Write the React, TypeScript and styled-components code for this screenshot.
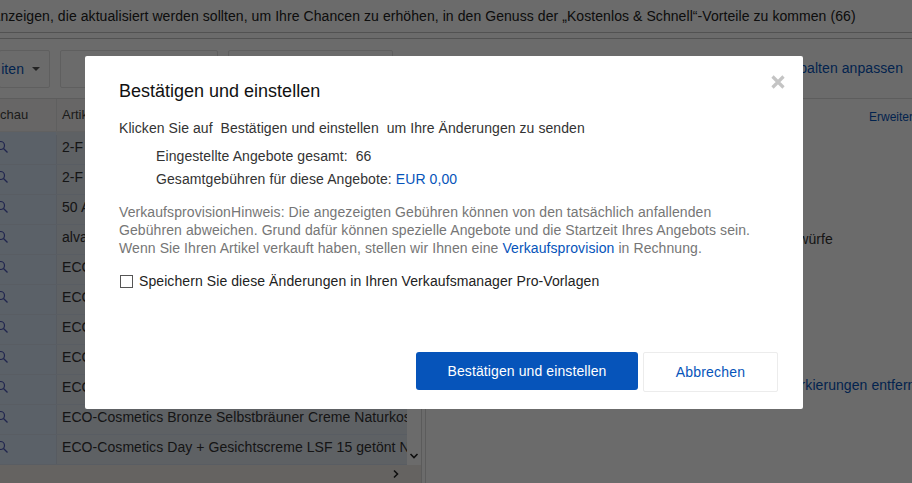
import React from "react";
import styled, { createGlobalStyle } from "styled-components";

const Global = createGlobalStyle`
  html, body { margin: 0; padding: 0; background: #fff; }
  body { font-family: "Liberation Sans", Arial, sans-serif; font-size: 14px; color: #333; letter-spacing: 0.07px; }
  * { box-sizing: border-box; }
`;

const Page = styled.div`
  width: 912px;
  height: 483px;
  overflow: hidden;
  display: flex;
  flex-direction: column;
`;
const Notice = styled.div`
  height: 33px;
  flex: none;
  padding-top: 8px;
  margin-left: -9px;
  font-size: 14px;
  line-height: 16px;
  white-space: nowrap;
  color: #222;
  border-bottom: 1px solid #c4c4c4;
`;
const Toolbar = styled.div`
  height: 61px;
  flex: none;
  margin-top: 5px;
  padding-top: 11px;
  border-top: 1px solid #c4c4c4;
  border-bottom: 1px solid #ddd;
  display: flex;
  gap: 10px;
`;
const ToolButton = styled.div<{ $w: number; $ml?: number }>`
  width: ${(p) => p.$w}px;
  margin-left: ${(p) => p.$ml ?? 0}px;
  height: 38px;
  flex: none;
  display: flex;
  align-items: center;
  justify-content: flex-end;
  gap: 8px;
  padding-right: 9px;
  border: 1px solid #e2e2e2;
  border-radius: 2px;
  color: #0654ba;
  white-space: nowrap;
`;
const Caret = styled.span`
  width: 0;
  height: 0;
  border-left: 4px solid transparent;
  border-right: 4px solid transparent;
  border-top: 4px solid #555;
`;
const Customize = styled.div`
  margin-left: auto;
  margin-right: 9px;
  height: 38px;
  line-height: 36px;
  color: #0654ba;
  white-space: nowrap;
`;
const Body = styled.div`
  flex: 1;
  min-height: 0;
  display: grid;
  grid-template-columns: 422px 1fr;
`;
const TablePane = styled.div`
  display: flex;
  flex-direction: column;
  border-right: 1px solid #d8d8d8;
  overflow: hidden;
`;
const TableScroll = styled.div`
  flex: 1;
  min-height: 0;
  display: flex;
`;
const Table = styled.div`
  width: 407px;
  flex: none;
  overflow: hidden;
`;
const VScroll = styled.div`
  flex: 1;
  display: flex;
  align-items: flex-end;
  justify-content: center;
  padding-bottom: 5px;
  color: #222;
`;
const HeaderRow = styled.div`
  height: 33px;
  display: grid;
  grid-template-columns: 56px 1fr;
  background: #f6f4f2;
  border-bottom: 1px solid #e6e6e6;
  font-size: 13px;
  line-height: 32px;
  letter-spacing: 0;
  color: #444;
`;
const HeadCell = styled.div<{ $first?: boolean }>`
  padding-left: ${(p) => (p.$first ? 0 : 5)}px;
  margin-left: ${(p) => (p.$first ? -26 : 0)}px;
  border-left: ${(p) => (p.$first ? "none" : "1px solid #e2e2e2")};
  white-space: nowrap;
  overflow: ${(p) => (p.$first ? "visible" : "hidden")};
`;
const Rows = styled.div`
  padding-top: 3px;
  background: linear-gradient(90deg, #d9e6f7 56px, #e0e6ef 56px);
`;
const Row = styled.div`
  height: 30px;
  display: grid;
  grid-template-columns: 56px 1fr;
  border-bottom: 1px solid #d3deec;
`;
const PreviewCell = styled.div`
  height: 24px;
  display: flex;
  align-items: center;
  color: #4a56b8;
  overflow: hidden;
`;
const TitleCell = styled.div`
  padding-left: 5px;
  line-height: 24px;
  white-space: nowrap;
  overflow: hidden;
  color: #333;
  border-left: 1px solid #d0d9e6;
`;
const HScroll = styled.div`
  height: 18px;
  flex: none;
  display: flex;
  justify-content: flex-end;
  align-items: center;
  padding-right: 21px;
  background: #f0ece8;
  color: #222;
`;
const SidePane = styled.div`
  display: flex;
  flex-direction: column;
  margin-left: 3px;
  border-left: 1px solid #dcdcdc;
  white-space: nowrap;
  overflow: hidden;
`;
const SideHead = styled.div`
  height: 33px;
  padding-left: 443px;
  font-size: 12px;
  line-height: 36px;
  letter-spacing: 0;
  color: #0654ba;
`;
const SideText = styled.div<{ $top: number; $left: number; $blue?: boolean }>`
  margin-top: ${(p) => p.$top}px;
  padding-left: ${(p) => p.$left}px;
  line-height: 16px;
  color: ${(p) => (p.$blue ? "#0654ba" : "#333")};
`;

const Backdrop = styled.div`
  position: fixed;
  inset: 0;
  background: rgba(0, 0, 0, 0.58);
  padding: 56px 0 0 85px;
`;
const Modal = styled.div`
  position: relative;
  width: 718px;
  height: 353px;
  background: #fff;
  border-radius: 2px;
  padding: 25px 25px 17px 34px;
  display: flex;
  flex-direction: column;
  color: #333;
`;
const Close = styled.button`
  position: absolute;
  top: 19px;
  right: 18px;
  width: 14px;
  height: 14px;
  padding: 0;
  border: 0;
  background: none;
  color: #c4c4c4;
  display: flex;
`;
const Title = styled.h2`
  margin: 0;
  font-size: 18px;
  font-weight: 400;
  line-height: 20px;
  letter-spacing: 0;
  color: #111;
`;
const Lead = styled.p`
  margin: 19px 0 0;
  line-height: 16px;
  white-space: pre;
`;
const Summary = styled.div`
  margin-top: 12px;
  padding-left: 37px;
  display: flex;
  flex-direction: column;
  gap: 7px;
  line-height: 16px;
  letter-spacing: 0.09px;
  white-space: pre;
`;
const Link = styled.a`
  color: #0654ba;
  text-decoration: none;
`;
const Hint = styled.p`
  margin: 16px 0 0;
  line-height: 18px;
  letter-spacing: 0.088px;
  color: #767676;
  white-space: pre;
`;
const CheckRow = styled.label`
  margin-top: 16px;
  margin-left: 1px;
  display: flex;
  align-items: center;
  gap: 6px;
  line-height: 16px;
  letter-spacing: 0.085px;
  color: #222;
`;
const Box = styled.span`
  width: 13px;
  height: 13px;
  flex: none;
  border: 1px solid #555;
  background: #fff;
`;
const Footer = styled.div`
  margin-top: auto;
  display: flex;
  justify-content: flex-end;
  align-items: flex-start;
  gap: 5px;
`;
const Primary = styled.button`
  width: 222px;
  height: 38px;
  border: 0;
  border-radius: 3px;
  background: #0654ba;
  color: #fff;
  font: 14px "Liberation Sans", Arial, sans-serif;
  letter-spacing: 0.1px;
  padding: 0 0 1px;
`;
const Secondary = styled.button`
  width: 135px;
  height: 40px;
  border: 1px solid #ececec;
  border-radius: 2px;
  background: #fff;
  color: #0654ba;
  font: 14px "Liberation Sans", Arial, sans-serif;
  letter-spacing: 0.2px;
  padding: 0;
`;
const Glass = styled.svg`
  width: 14px;
  height: 14px;
  margin-left: -5px;
  flex: none;
`;

const rows = ["2-F", "2-F", "50 A", "alva", "ECO-Cosmetics", "ECO-Cosmetics", "ECO-Cosmetics", "ECO-Cosmetics", "ECO-Cosmetics", "ECO-Cosmetics Bronze Selbstbräuner Creme Naturkosmetik", "ECO-Cosmetics Day + Gesichtscreme LSF 15 getönt Naturkosmetik"];

const Magnifier = () => (
  <Glass viewBox="0 0 14 14" fill="none" stroke="currentColor" strokeWidth="1.2">
    <circle cx="5.5" cy="5.5" r="4" />
    <path d="M8.5 8.5 12.5 12.5" />
  </Glass>
);

export default function App() {
  return (
    <>
      <Global />
      <Page>
        <Notice>Anzeigen, die aktualisiert werden sollten, um Ihre Chancen zu erhöhen, in den Genuss der „Kostenlos &amp; Schnell“-Vorteile zu kommen (66)</Notice>
        <Toolbar>
          <ToolButton $w={51} $ml={-1}>iten<Caret /></ToolButton>
          <ToolButton $w={158} />
          <ToolButton $w={165} />
          <Customize>Spalten anpassen</Customize>
        </Toolbar>
        <Body>
          <TablePane>
            <TableScroll>
              <Table>
                <HeaderRow>
                  <HeadCell $first>Vorschau</HeadCell>
                  <HeadCell>Artikelbezeichnung</HeadCell>
                </HeaderRow>
                <Rows>
                  {rows.map((title, i) => (
                    <Row key={i}>
                      <PreviewCell><Magnifier /></PreviewCell>
                      <TitleCell>{title}</TitleCell>
                    </Row>
                  ))}
                </Rows>
              </Table>
              <VScroll>
                <svg width="10" height="8" viewBox="0 0 10 8" fill="none" stroke="currentColor" strokeWidth="1.6"><path d="M1.5 2 5 5.5 8.5 2" /></svg>
              </VScroll>
            </TableScroll>
            <HScroll>
              <svg width="8" height="10" viewBox="0 0 8 10" fill="none" stroke="currentColor" strokeWidth="1.6"><path d="M2 1.5 5.5 5 2 8.5" /></svg>
            </HScroll>
          </TablePane>
          <SidePane>
            <SideHead>Erweiterte Optionen</SideHead>
            <SideText $top={99} $left={351}>Entwürfe</SideText>
            <SideText $top={130} $left={355} $blue>Markierungen entfernen</SideText>
          </SidePane>
        </Body>
      </Page>
      <Backdrop>
        <Modal>
          <Close aria-label="Schließen">
            <svg width="14" height="14" viewBox="0 0 14 14" fill="none" stroke="currentColor" strokeWidth="3.2"><path d="M1.5 1.5 12.5 12.5M12.5 1.5 1.5 12.5" /></svg>
          </Close>
          <Title>Bestätigen und einstellen</Title>
          <Lead>{"Klicken Sie auf  Bestätigen und einstellen  um Ihre Änderungen zu senden"}</Lead>
          <Summary>
            <div>{"Eingestellte Angebote gesamt:  66"}</div>
            <div>Gesamtgebühren für diese Angebote: <Link>EUR 0,00</Link></div>
          </Summary>
          <Hint>
            {"VerkaufsprovisionHinweis: Die angezeigten Gebühren können von den tatsächlich anfallenden\nGebühren abweichen. Grund dafür können spezielle Angebote und die Startzeit Ihres Angebots sein.\nWenn Sie Ihren Artikel verkauft haben, stellen wir Ihnen eine "}
            <Link>Verkaufsprovision</Link>{" in Rechnung."}
          </Hint>
          <CheckRow><Box />Speichern Sie diese Änderungen in Ihren Verkaufsmanager Pro-Vorlagen</CheckRow>
          <Footer>
            <Primary>Bestätigen und einstellen</Primary>
            <Secondary>Abbrechen</Secondary>
          </Footer>
        </Modal>
      </Backdrop>
    </>
  );
}
